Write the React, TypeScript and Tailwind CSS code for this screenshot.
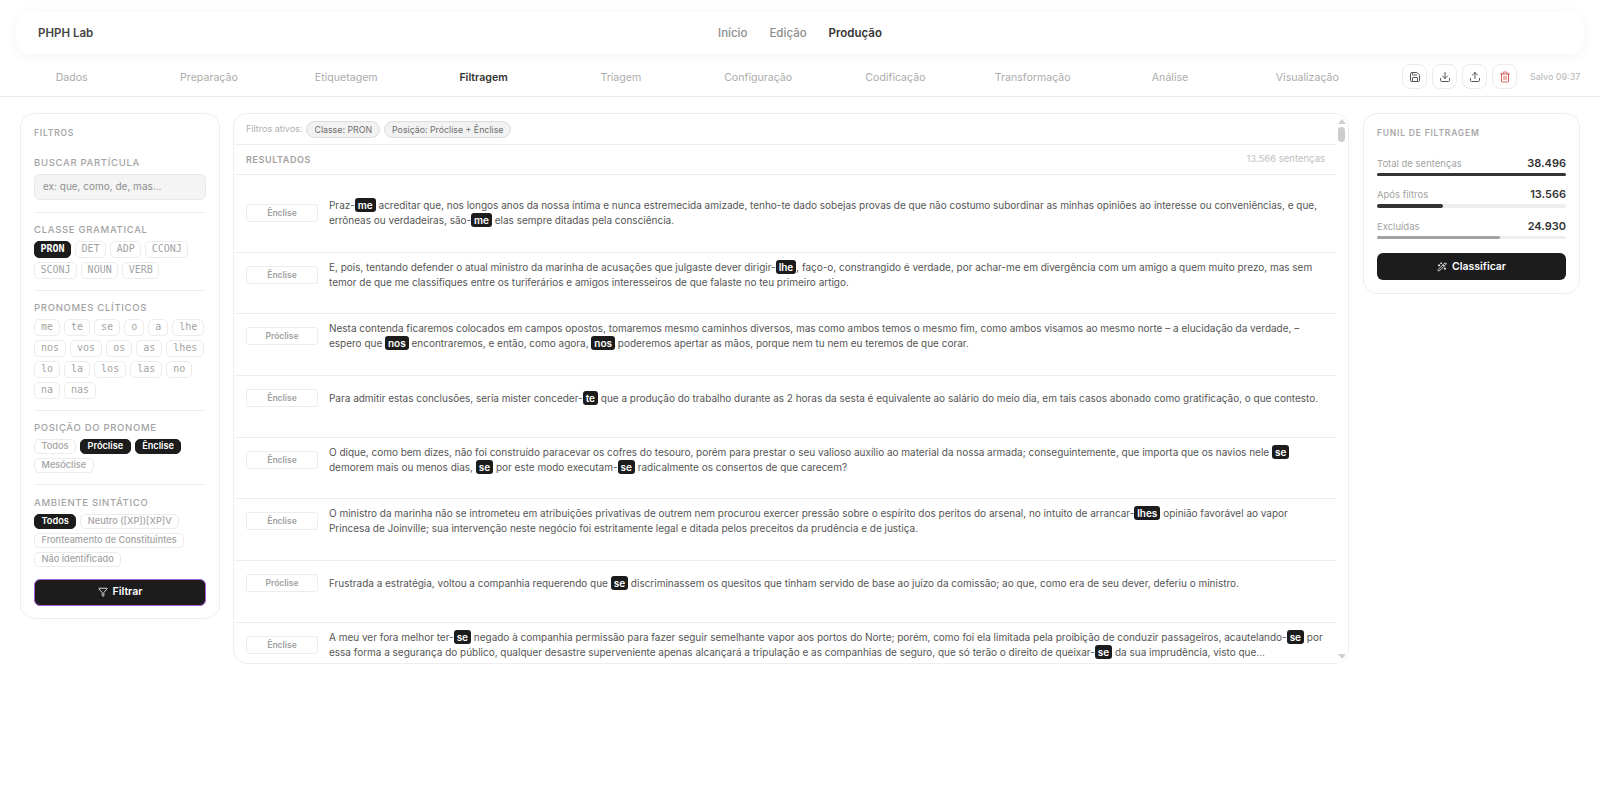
import { Download, Filter, Save, Trash2, Upload, WandSparkles } from "lucide-react";

const navLinks = ["Início", "Edição", "Produção"];
const steps = ["Dados", "Preparação", "Etiquetagem", "Filtragem", "Triagem", "Configuração", "Codificação", "Transformação", "Análise", "Visualização"];
const classes = ["PRON", "DET", "ADP", "CCONJ", "SCONJ", "NOUN", "VERB"];
const clitics = ["me", "te", "se", "o", "a", "lhe", "nos", "vos", "os", "as", "lhes", "lo", "la", "los", "las", "no", "na", "nas"];

// [[ ]] marks the highlighted pronoun inside a sentence
const rows = [
  { tag: "Ênclise", box: "h-[78px] pt-[23px]", text: "Praz-[[me]] acreditar que, nos longos anos da nossa íntima e nunca estremecida amizade, tenho-te dado sobejas provas de que não costumo subordinar as minhas opiniões ao interesse ou conveniências, e que, errôneas ou verdadeiras, são-[[me]] elas sempre ditadas pela consciência." },
  { tag: "Ênclise", box: "h-[61px] pt-[7px]", text: "E, pois, tentando defender o atual ministro da marinha de acusações que julgaste dever dirigir-[[lhe]], faço-o, constrangido é verdade, por achar-me em divergência com um amigo a quem muito prezo, mas sem temor de que me classifiques entre os turiferários e amigos interesseiros de que falaste no teu primeiro artigo." },
  { tag: "Próclise", box: "h-[62px] pt-[7px]", text: "Nesta contenda ficaremos colocados em campos opostos, tomaremos mesmo caminhos diversos, mas como ambos temos o mesmo fim, como ambos visamos ao mesmo norte – a elucidação da verdade, – espero que [[nos]] encontraremos, e então, como agora, [[nos]] poderemos apertar as mãos, porque nem tu nem eu teremos de que corar." },
  { tag: "Ênclise", box: "h-[62px] pt-[7px]", text: "Para admitir estas conclusões, seria mister conceder-[[te]] que a produção do trabalho durante as 2 horas da sesta é equivalente ao salário do meio dia, em tais casos abonado como gratificação, o que contesto." },
  { tag: "Ênclise", box: "h-[61px] pt-[7px]", text: "O dique, como bem dizes, não foi construído paracevar os cofres do tesouro, porém para prestar o seu valioso auxílio ao material da nossa armada; conseguintemente, que importa que os navios nele [[se]] demorem mais ou menos dias, [[se]] por este modo executam-[[se]] radicalmente os consertos de que carecem?" },
  { tag: "Ênclise", box: "h-[62px] pt-[7px]", text: "O ministro da marinha não se intrometeu em atribuições privativas de outrem nem procurou exercer pressão sobre o espírito dos peritos do arsenal, no intuito de arrancar-[[lhes]] opinião favorável ao vapor Princesa de Joinville; sua intervenção neste negócio foi estritamente legal e ditada pelos preceitos da prudência e de justiça." },
  { tag: "Próclise", box: "h-[62px] pt-[7px]", text: "Frustrada a estratégia, voltou a companhia requerendo que [[se]] discriminassem os quesitos que tinham servido de base ao juízo da comissão; ao que, como era de seu dever, deferiu o ministro." },
  { tag: "Ênclise", box: "h-[62px] pt-[7px]", text: "A meu ver fora melhor ter-[[se]] negado à companhia permissão para fazer seguir semelhante vapor aos portos do Norte; porém, como foi ela limitada pela proibição de conduzir passageiros, acautelando-[[se]] por essa forma a segurança do público, qualquer desastre superveniente apenas alcançará a tripulação e as companhias de seguro, que só terão o direito de queixar-[[se]] da sua imprudência, visto que…" },
];

const funnel = [
  { label: "Total de sentenças", value: "38.496", pct: 100, bar: "bg-[#333333]" },
  { label: "Após filtros", value: "13.566", pct: 35, bar: "bg-[#333333]" },
  { label: "Excluídas", value: "24.930", pct: 65, bar: "bg-[#a3a3a3]" },
];

function Chip({ label, active = false }: { label: string; active?: boolean }) {
  const look = active
    ? "bg-[#1c1c1c] border-[#1c1c1c] text-white font-semibold"
    : "bg-white border-[#ececec] text-[#a3a3a3] font-medium";
  return <span className={`inline-flex h-[15px] items-center rounded-[5px] border px-[6.5px] text-[9.2px] leading-none ${look}`}>{label}</span>;
}

function MonoChip({ label, active = false, upper = false }: { label: string; active?: boolean; upper?: boolean }) {
  const look = active
    ? "bg-[#1c1c1c] border-[#1c1c1c] text-white font-bold"
    : "bg-white border-[#ececec] text-[#a3a3a3]";
  return (
    <span className={`inline-flex h-[17px] items-center rounded-[5px] border font-['DejaVu_Sans_Mono',monospace] text-[10px] leading-none ${upper ? "px-[5.5px]" : "px-[6px]"} ${look}`}>
      {label}
    </span>
  );
}

function Sentence({ text }: { text: string }) {
  const parts = text.split(/\[\[|\]\]/);
  return (
    <p className="w-[998px] text-[10px] leading-[15px] tracking-[-0.012px] text-[#555555]">
      {parts.map((part, i) =>
        i % 2 === 1 ? (
          <span key={i} className="rounded-[3px] bg-[#1c1c1c] px-[3px] py-px font-semibold text-white">
            {part}
          </span>
        ) : (
          part
        ),
      )}
    </p>
  );
}

function Label({ children }: { children: string }) {
  return <div className="text-[9.5px] font-medium leading-none tracking-[0.7px] text-[#a3a3a3]">{children}</div>;
}

export default function App() {
  return (
    <div className="h-[787px] overflow-hidden bg-white font-['Inter',sans-serif]">
      {/* Top nav */}
      <div className="px-4 pt-[12px]">
        <div className="relative flex h-[42px] items-center rounded-[14px] bg-white px-[22px] pt-[2px] shadow-[0_2px_14px_rgba(0,0,0,0.05)]">
          <span className="text-[11.5px] font-semibold text-[#444444]">PHPH Lab</span>
          <div className="absolute inset-x-0 flex justify-center gap-[22px]">
            {navLinks.map((l) => (
              <span key={l} className={l === "Produção" ? "text-[11.5px] font-semibold text-[#333333]" : "text-[11.5px] font-medium text-[#8c8c8c]"}>
                {l}
              </span>
            ))}
          </div>
        </div>
      </div>

      {/* Stepper */}
      <div className="flex h-[43px] items-center border-b border-[#eaeaea] pl-[3px]">
        <div className="flex w-[1373px] pt-[6px]">
          {steps.map((s) => (
            <span key={s} className={s === "Filtragem" ? "flex-1 text-center text-[10.6px] font-semibold text-[#333333]" : "flex-1 text-center text-[10.6px] text-[#acacac]"}>
              {s}
            </span>
          ))}
        </div>
        <div className="ml-[26px] flex items-center gap-[5px] pt-[3px]">
          {[Save, Download, Upload, Trash2].map((Icon, i) => (
            <span key={i} className="flex h-[25px] w-[25px] items-center justify-center rounded-[8px] border border-[#ececec] bg-white">
              <Icon size={12} className={i === 3 ? "text-[#d9605a]" : "text-[#555555]"} />
            </span>
          ))}
        </div>
        <span className="ml-[13px] pt-[3px] text-[9px] text-[#b5b5b5]">Salvo 09:37</span>
      </div>

      {/* Body */}
      <div className="flex items-start pl-[20px] pt-[16px]">
        {/* Filters */}
        <aside className="h-[506px] w-[200px] shrink-0 rounded-[14px] border border-[#eeeeee] bg-white px-[13px] pt-[15px]">
          <div className="text-[8.5px] font-semibold leading-none tracking-[0.8px] text-[#a8a8a8]">FILTROS</div>
          <div className="mt-[20.5px]">
            <Label>BUSCAR PARTÍCULA</Label>
            <div className="mt-[6px] flex h-[26px] items-center rounded-[6px] border border-[#e8e8e8] bg-[#f4f4f4] px-[8px] text-[10px] text-[#8f8f8f]">ex: que, como, de, mas...</div>
          </div>
          <div className="mt-[12px] border-t border-[#eeeeee] pt-[12.5px]">
            <Label>CLASSE GRAMATICAL</Label>
            <div className="mt-[6px] flex flex-wrap gap-[4px]">
              {classes.map((c, i) => (
                <MonoChip key={c} label={c} upper active={i === 0} />
              ))}
            </div>
          </div>
          <div className="mt-[11px] border-t border-[#eeeeee] pt-[12.5px]">
            <Label>PRONOMES CLÍTICOS</Label>
            <div className="mt-[6px] flex flex-wrap gap-[4px]">
              {clitics.map((c) => (
                <MonoChip key={c} label={c} />
              ))}
            </div>
          </div>
          <div className="mt-[11px] border-t border-[#eeeeee] pt-[12.5px]">
            <Label>POSIÇÃO DO PRONOME</Label>
            <div className="mt-[6px] flex flex-wrap gap-[4px]">
              <Chip label="Todos" />
              <Chip label="Próclise" active />
              <Chip label="Ênclise" active />
              <Chip label="Mesóclise" />
            </div>
          </div>
          <div className="mt-[11px] border-t border-[#eeeeee] pt-[13.5px]">
            <Label>AMBIENTE SINTÁTICO</Label>
            <div className="mt-[6px] flex flex-wrap gap-[4px]">
              <Chip label="Todos" active />
              <Chip label="Neutro ([XP])[XP]V" />
              <Chip label="Fronteamento de Constituintes" />
              <Chip label="Não identificado" />
            </div>
          </div>
          <button className="mt-[12px] flex h-[27px] w-full items-center justify-center gap-[5px] rounded-[6px] border border-[#a35fd6] bg-[#1c1c1c] text-[10.5px] font-semibold text-white">
            <Filter size={10} />
            Filtrar
          </button>
        </aside>

        {/* Results */}
        <main className="relative ml-[13px] h-[551px] w-[1116px] shrink-0 overflow-hidden rounded-[14px] border border-[#eeeeee] bg-white">
          <div className="mr-[12px]">
            <div className="flex h-[31px] items-center border-b border-[#eeeeee] pl-[12px]">
              <span className="text-[9px] text-[#b0b0b0]">Filtros ativos:</span>
              <span className="ml-[4px] rounded-full border border-[#dddddd] bg-[#f2f2f2] px-[7px] py-[3px] text-[8.8px] leading-[9px] text-[#6e6e6e]">Classe: PRON</span>
              <span className="ml-[4px] rounded-full border border-[#dddddd] bg-[#f2f2f2] px-[7px] py-[3px] text-[8.8px] leading-[9px] text-[#6e6e6e]">Posição: Próclise + Ênclise</span>
            </div>
            <div className="flex h-[30px] items-center justify-between border-b border-[#eeeeee] pl-[12px] pr-[11px]">
              <span className="text-[9px] font-semibold tracking-[0.6px] text-[#a0a0a0]">RESULTADOS</span>
              <span className="text-[9.5px] text-[#c0c0c0]">13.566 sentenças</span>
            </div>
            {rows.map((r, i) => (
              <div key={i} className={`border-b border-[#eeeeee] pl-[12px] ${r.box}`}>
                <div className="flex h-[30px] items-center">
                  <span className="flex h-[18px] w-[72px] shrink-0 items-center justify-center rounded-[3px] border border-[#ececec] text-[8.5px] font-semibold text-[#a0a0a0]">{r.tag}</span>
                  <div className="ml-[11px]">
                    <Sentence text={r.text} />
                  </div>
                </div>
              </div>
            ))}
          </div>
          {/* Scrollbar */}
          <div className="absolute inset-y-0 right-0 flex w-[12px] flex-col items-center bg-white pr-[1px] pt-[5px]">
            <span className="h-0 w-0 border-x-[4px] border-b-[5px] border-x-transparent border-b-[#d0d0d0]" />
            <span className="mt-[3px] h-[15px] w-[7px] rounded-full bg-[#cccccc]" />
            <span className="mb-[4px] mt-auto h-0 w-0 border-x-[4px] border-t-[5px] border-x-transparent border-t-[#d0d0d0]" />
          </div>
        </main>

        {/* Funnel */}
        <aside className="ml-[14px] h-[181px] w-[217px] shrink-0 rounded-[14px] border border-[#eeeeee] bg-white px-[13px] pt-[15px]">
          <div className="text-[8.5px] font-semibold leading-none tracking-[0.8px] text-[#a8a8a8]">FUNIL DE FILTRAGEM</div>
          <div className="mt-[18px] flex flex-col gap-[11px]">
            {funnel.map((f) => (
              <div key={f.label}>
                <div className="flex items-center justify-between">
                  <span className="text-[9.5px] leading-[15px] text-[#a3a3a3]">{f.label}</span>
                  <span className="text-[11px] font-semibold leading-[15px] text-[#333333]">{f.value}</span>
                </div>
                <div className="mt-[2px] h-[3.5px] rounded-full bg-[#eeeeee]">
                  <div className={`h-full rounded-full ${f.bar}`} style={{ width: `${f.pct}%` }} />
                </div>
              </div>
            ))}
          </div>
          <button className="mt-[14px] flex h-[27px] w-full items-center justify-center gap-[5px] rounded-[6px] bg-[#1c1c1c] text-[10.5px] font-semibold text-white">
            <WandSparkles size={10} />
            Classificar
          </button>
        </aside>
      </div>
    </div>
  );
}
